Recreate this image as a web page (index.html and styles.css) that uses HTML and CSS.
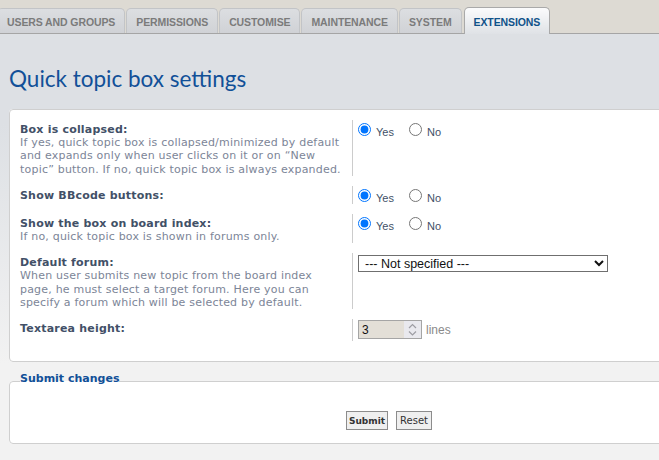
FILE: index.html
```html
<!DOCTYPE html>
<html lang="en">
<head>
<meta charset="utf-8">
<title>Quick topic box settings</title>
<link rel="stylesheet" href="styles.css">
</head>
<body>
<nav class="tabbar">
  <ul class="tabs">
    <li class="tab">USERS AND GROUPS</li>
    <li class="tab">PERMISSIONS</li>
    <li class="tab">CUSTOMISE</li>
    <li class="tab">MAINTENANCE</li>
    <li class="tab">SYSTEM</li>
    <li class="tab tab-active">EXTENSIONS</li>
  </ul>
</nav>
<main class="main">
  <div class="content">
    <h1 class="title">Quick topic box settings</h1>
    <fieldset class="panel">
      <dl class="row">
        <dt class="term"><label class="label">Box is collapsed:</label><span class="explain">If yes, quick topic box is collapsed/minimized by default and expands only when user clicks on it or on “New topic” button. If no, quick topic box is always expanded.</span></dt>
        <dd class="field"><label class="opt"><input class="radio" type="radio" name="collapsed" checked>Yes</label><label class="opt"><input class="radio" type="radio" name="collapsed">No</label></dd>
      </dl>
      <dl class="row">
        <dt class="term"><label class="label">Show BBcode buttons:</label></dt>
        <dd class="field"><label class="opt"><input class="radio" type="radio" name="bbcode" checked>Yes</label><label class="opt"><input class="radio" type="radio" name="bbcode">No</label></dd>
      </dl>
      <dl class="row">
        <dt class="term"><label class="label">Show the box on board index:</label><span class="explain">If no, quick topic box is shown in forums only.</span></dt>
        <dd class="field"><label class="opt"><input class="radio" type="radio" name="index" checked>Yes</label><label class="opt"><input class="radio" type="radio" name="index">No</label></dd>
      </dl>
      <dl class="row">
        <dt class="term"><label class="label">Default forum:</label><span class="explain">When user submits new topic from the board index page, he must select a target forum. Here you can specify a forum which will be selected by default.</span></dt>
        <dd class="field field-select"><select class="select"><option>--- Not specified ---</option></select></dd>
      </dl>
      <dl class="row row-last">
        <dt class="term"><label class="label">Textarea height:</label></dt>
        <dd class="field field-num">
          <span class="num"><input class="num-input" type="text" value="3" readonly><span class="num-spin"><svg width="17" height="17" viewBox="0 0 17 17"><path d="M5 7 L8.5 3.5 L12 7" fill="none" stroke="#9d9da3" stroke-width="1.2"/><path d="M5 10.5 L8.5 14 L12 10.5" fill="none" stroke="#9d9da3" stroke-width="1.2"/></svg></span></span>
          <span class="unit">lines</span>
        </dd>
      </dl>
    </fieldset>
    <fieldset class="submit">
      <legend class="legend">Submit changes</legend>
      <div class="buttons">
        <button class="btn btn-primary" type="button">Submit</button>
        <button class="btn" type="button">Reset</button>
      </div>
    </fieldset>
  </div>
</main>
</body>
</html>
```
FILE: styles.css
```css
html, body {
  margin: 0;
  padding: 0;
}
body {
  background: #f2f2f2;
  font-family: "DejaVu Sans", Verdana, sans-serif;
  overflow: hidden;
}

/* tabs */
.tabbar {
  box-sizing: border-box;
  height: 34px;
  background: #dddad3;
  border-bottom: 1px solid #a5a5a5;
  display: flex;
  align-items: flex-end;
}
.tabs {
  display: flex;
  align-items: flex-end;
  gap: 1px;
  list-style: none;
  margin: 0 0 0 -3px;
  padding: 0;
}
.tab {
  box-sizing: border-box;
  height: 25px;
  padding: 5px 9px 0;
  border: 1px solid #c2c4c7;
  border-bottom: 0;
  border-radius: 5px 5px 0 0;
  background: linear-gradient(#dcdee1, #d0d2d6);
  color: #7b7b7b;
  font: bold 10.5px/16px "Liberation Sans", Arial, sans-serif;
  letter-spacing: -0.1px;
  white-space: nowrap;
}
.tab-active {
  height: 27px;
  padding-top: 6px;
  margin-bottom: -1px;
  margin-left: 1px;
  border-color: #a9a9a9;
  background: linear-gradient(#fbfbfc, #dfe2e6);
  color: #105289;
}

/* main */
.main {
  background: linear-gradient(#dde0e4 0, #dde0e4 90px, #f2f2f2 330px);
  padding: 30px 0 20px 9px;
}
.content {
  width: 760px;
}
.title {
  margin: 0 0 15px;
  font: normal 22.5px/30px "Lato", "Open Sans", sans-serif;
  color: #115098;
}

.panel,
.submit {
  box-sizing: border-box;
  width: 760px;
  min-width: 0;
  margin: 0;
  background: #fff;
  border: 1px solid #cfcfcf;
  border-radius: 4px;
}
.panel {
  padding: 10px 10px 10px;
}
.row {
  display: flex;
  margin: 0 0 10px;
}
.term {
  box-sizing: border-box;
  width: 332px;
  margin: 0;
  padding: 3px 8px 0 0;
  font-size: 11px;
  line-height: 13.2px;
  letter-spacing: 0.2px;
}
.label {
  display: block;
  font-weight: bold;
  color: #425067;
}
.explain {
  display: block;
  color: #7c8597;
}
.field {
  margin: 0;
  padding: 3px 0 0 5px;
  border-left: 1px solid #cccccc;
  font: 11px "Liberation Sans", Arial, sans-serif;
  color: #425067;
}
.opt {
  margin-right: 15px;
}
.radio {
  margin: 0 5px 0 0;
}
.field-select {
  padding-top: 2px;
}
.select {
  box-sizing: border-box;
  width: 250px;
  height: 17px;
  margin: 0;
  padding: 0 0 0 2px;
  border: 1px solid #6f6f6f;
  border-radius: 0;
  background: #fff;
  color: #111;
  font: 12.5px "Liberation Sans", Arial, sans-serif;
}
.field-num {
  display: flex;
  align-items: center;
  gap: 4px;
  padding: 1px 0 2px 5px;
}
.num {
  box-sizing: border-box;
  display: inline-flex;
  width: 64px;
  height: 19px;
  border: 1px solid #a5a5a5;
  background: #e9e9ee;
}
.num-input {
  box-sizing: border-box;
  width: 45px;
  height: 100%;
  margin: 0;
  padding: 0 0 0 3px;
  border: 0;
  outline: none;
  background: #e3dfd7;
  color: #111;
  font: 12px "Liberation Sans", Arial, sans-serif;
}
.num-spin {
  flex: 1;
  display: flex;
  align-items: center;
  justify-content: center;
}
.unit {
  color: #8a8a8a;
  font-size: 12px;
}

/* submit */
.submit {
  margin-top: 10px;
  padding: 20px 10px 13px;
}
.legend {
  padding: 0 0 6px;
  color: #115098;
  font: bold 11px "DejaVu Sans", Verdana, sans-serif;
}
.buttons {
  display: flex;
  justify-content: center;
  gap: 8px;
}
.btn {
  box-sizing: border-box;
  height: 19px;
  margin: 0;
  padding: 0 3px;
  border: 1px solid #8c8c8c;
  border-radius: 0;
  background: #efefef;
  color: #333;
  font: 10px "DejaVu Sans", Verdana, sans-serif;
}
.btn-primary {
  padding: 0 2px;
  font-weight: bold;
  font-size: 9px;
}
```
